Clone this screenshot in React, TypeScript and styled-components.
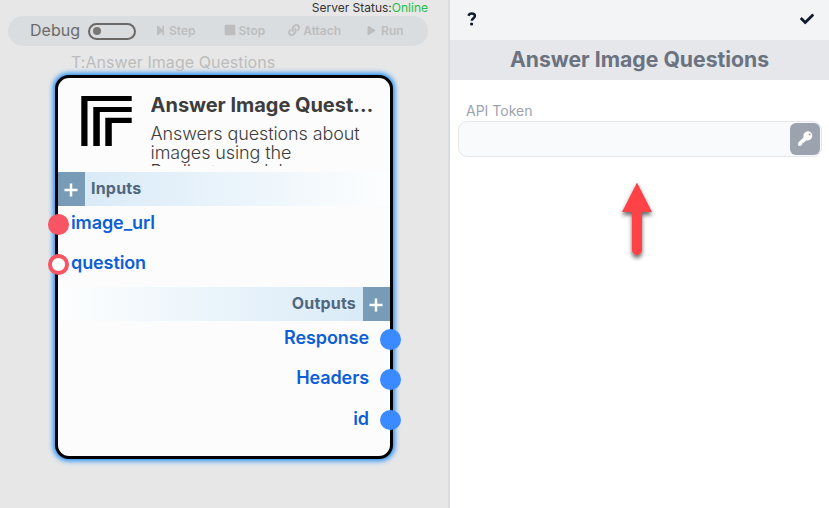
import React from "react";
import styled, { createGlobalStyle } from "styled-components";
import { FaStepForward, FaStop, FaPlay, FaCheck, FaLink } from "react-icons/fa";

const GlobalStyle = createGlobalStyle`
  *, *::before, *::after { box-sizing: border-box; }
  body { margin: 0; font-family: Inter, "Liberation Sans", sans-serif; background: #fff; }
  svg { display: block; flex: none; }
`;

const Page = styled.div`
  display: flex;
  width: 829px;
  height: 508px;
  overflow: hidden;
`;

const Canvas = styled.main`
  width: 448px;
  background: #e7e7e7;
`;

const ServerStatus = styled.div`
  height: 16px;
  padding-right: 20px;
  text-align: right;
  font-size: 12px;
  line-height: 16px;
  color: #333;
`;

const Online = styled.span`
  color: #22c04b;
`;

const Toolbar = styled.div`
  display: flex;
  align-items: center;
  width: 420px;
  height: 30px;
  margin-left: 8px;
  padding-left: 22px;
  border-radius: 15px;
  background: #d9dde0;
`;

const DebugLabel = styled.span`
  width: 58px;
  margin-top: -2px;
  font-size: 16px;
  line-height: 20px;
  letter-spacing: 0.05px;
  color: #6b6b6b;
`;

const Toggle = styled.span`
  display: flex;
  align-items: center;
  width: 48px;
  height: 17px;
  padding-left: 3px;
  border: 2px solid #6b6868;
  border-radius: 9px;

  &::before {
    content: "";
    width: 8px;
    height: 8px;
    border-radius: 50%;
    background: #777;
  }
`;

const Tool = styled.span<{ $offset: number; $gap: number }>`
  display: flex;
  align-items: center;
  gap: ${(p) => p.$gap}px;
  margin-left: ${(p) => p.$offset}px;
  color: #bdbdbd;
  font-size: 12px;
  font-weight: 600;
  line-height: 16px;

  svg { margin-top: -2px; }
`;

const NodeCaption = styled.div`
  height: 29px;
  padding: 6px 0 0 71px;
  font-size: 16px;
  line-height: 20px;
  letter-spacing: 0.05px;
  color: #bcbcbc;
`;

const Node = styled.section`
  width: 338px;
  height: 384px;
  margin-left: 55px;
  border: 3px solid #000;
  border-radius: 14px;
  background: #fcfcfc;
  box-shadow: 0 0 5px 1.5px #2490f5;
`;

const NodeHeader = styled.header`
  display: flex;
  height: 94px;
  padding: 18px 16px 0 23px;
`;

const Summary = styled.div`
  width: 224px;
  margin: -3px 0 0 18.6px;
  color: #3d3d3d;
`;

const NodeTitle = styled.h2`
  margin: 0;
  overflow: hidden;
  font-size: 20px;
  font-weight: 700;
  line-height: 25px;
  letter-spacing: -0.04px;
  white-space: nowrap;
  text-overflow: ellipsis;
`;

const Description = styled.p`
  width: 218px;
  height: 42px;
  margin: 6px 0 0;
  overflow: hidden;
  font-size: 18px;
  font-weight: 300;
  line-height: 19px;
  letter-spacing: -0.1px;
`;

const Band = styled.div<{ $side: "in" | "out" }>`
  display: flex;
  flex-direction: ${(p) => (p.$side === "in" ? "row" : "row-reverse")};
  align-items: center;
  gap: ${(p) => (p.$side === "in" ? 6 : 7)}px;
  height: 34px;
  background: linear-gradient(to ${(p) => (p.$side === "in" ? "right" : "left")}, #d6e9f7, #fdfefe);
`;

const BandLabel = styled.span`
  margin-top: -2px;
  color: #50677f;
  font-size: 16px;
  font-weight: 700;
  line-height: 20px;
  letter-spacing: 0.2px;
`;

const AddButton = styled.span`
  display: grid;
  place-items: center;
  width: 27px;
  height: 34px;
  padding: 2px 1px 0 0;
  background: #789cb8;
`;

const Ports = styled.div<{ $height: number }>`
  height: ${(p) => p.$height}px;
`;

const Port = styled.div<{ $side: "in" | "out" }>`
  position: relative;
  height: 40.4px;
  padding: ${(p) => (p.$side === "in" ? "6px 0 0 13px" : "6px 21px 0 0")};
  text-align: ${(p) => (p.$side === "in" ? "left" : "right")};
  color: #0d5fd8;
  font-size: 18px;
  font-weight: 600;
  line-height: 22px;
  letter-spacing: -0.1px;
`;

const Dot = styled.span<{ $side: "in" | "out"; $open?: boolean }>`
  position: absolute;
  top: 8px;
  ${(p) => (p.$side === "in" ? "left: -10px" : "right: -11px")};
  width: 21px;
  height: 20.5px;
  border-radius: 50%;
  border: 4px solid ${(p) => (p.$side === "in" ? "#f75464" : "#3b8aff")};
  background: ${(p) => (p.$open ? "#fff" : p.$side === "in" ? "#f75464" : "#3b8aff")};
`;

const Panel = styled.aside`
  width: 381px;
  border-left: 2px solid #d9dce1;
  background: #fff;
`;

const PanelBar = styled.div`
  display: flex;
  align-items: center;
  justify-content: space-between;
  height: 40px;
  padding: 0 15px 2px 17px;
  background: #f3f4f6;
  color: #111a2d;
`;

const PanelTitle = styled.h1`
  height: 40px;
  margin: 0;
  background: #e5e7eb;
  color: #6b7280;
  text-align: center;
  font-size: 21.2px;
  font-weight: 700;
  line-height: 39px;
`;

const Field = styled.label`
  display: block;
  padding: 21px 7px 0 8px;
`;

const FieldLabel = styled.span`
  display: block;
  height: 20px;
  padding-left: 8px;
  font-size: 14px;
  line-height: 19px;
  color: #9ca3af;
`;

const TokenBox = styled.div`
  display: flex;
  justify-content: flex-end;
  height: 36px;
  padding: 1px;
  border: 1px solid #e5e7eb;
  border-radius: 9px;
  background: #f9fafb;
`;

const KeyButton = styled.span`
  display: grid;
  place-items: center;
  width: 30px;
  height: 32px;
  padding-bottom: 2px;
  border-radius: 6px;
  background: #9ca3af;
  color: #fff;
`;

const Pointer = styled.svg`
  margin: 20px 0 0 167px;
`;

const Plus = () => (
  <svg width="14" height="14" viewBox="0 0 14 14">
    <path d="M7 .5v13M.5 7h13" stroke="#fff" strokeWidth="2.5" />
  </svg>
);

const Logo = () => (
  <svg width="51" height="51" viewBox="0 0 51 51">
    <path d="M.3 50V0h50.4v5H6.5v45zM12.3 50V11h38.4v5H18.8v34zM24.3 50V21.7h26.4V27H30.8v23z" fill="#000" />
  </svg>
);

const HelpIcon = () => (
  <svg width="10" height="14" viewBox="0 0 10 14" fill="none">
    <path d="M1.4 3.7C2 2.2 3.1 1.5 4.7 1.5C6.5 1.5 7.9 2.4 7.9 4C7.9 6.1 4.8 6.3 4.8 8.7" stroke="currentColor" strokeWidth="2.5" />
    <circle cx="4.6" cy="12" r="1.6" fill="currentColor" />
  </svg>
);

const KeyIcon = () => (
  <svg width="15" height="15" viewBox="0 0 15 15">
    <path
      d="M10.2 .2a4.7 4.7 0 0 0-4.6 6L.2 11.7V14.7H2.9L4.4 13.2V11.8H5.8L8.4 9.2a4.6 4.6 0 1 0 1.8-9zM11.6 2.5a1.05 1.05 0 1 1 0 2.1a1.05 1.05 0 0 1 0-2.1z"
      fill="currentColor"
      fillRule="evenodd"
    />
  </svg>
);

export default function App() {
  return (
    <Page>
      <GlobalStyle />
      <Canvas>
        <ServerStatus>Server Status:<Online>Online</Online></ServerStatus>
        <Toolbar>
          <DebugLabel>Debug</DebugLabel>
          <Toggle />
          <Tool $offset={19} $gap={3}><FaStepForward size={11} />Step</Tool>
          <Tool $offset={28} $gap={3}><FaStop size={12} />Stop</Tool>
          <Tool $offset={23} $gap={3}><FaLink size={12} />Attach</Tool>
          <Tool $offset={26} $gap={5}><FaPlay size={9} />Run</Tool>
        </Toolbar>
        <NodeCaption>T:Answer Image Questions</NodeCaption>
        <Node>
          <NodeHeader>
            <Logo />
            <Summary>
              <NodeTitle>Answer Image Questions</NodeTitle>
              <Description>Answers questions about images using the Replicate model</Description>
            </Summary>
          </NodeHeader>
          <Band $side="in"><AddButton><Plus /></AddButton><BandLabel>Inputs</BandLabel></Band>
          <Ports $height={81}>
            <Port $side="in"><Dot $side="in" />image_url</Port>
            <Port $side="in"><Dot $side="in" $open />question</Port>
          </Ports>
          <Band $side="out"><AddButton><Plus /></AddButton><BandLabel>Outputs</BandLabel></Band>
          <Ports $height={135}>
            {["Response", "Headers", "id"].map((name) => (
              <Port key={name} $side="out"><Dot $side="out" />{name}</Port>
            ))}
          </Ports>
        </Node>
      </Canvas>
      <Panel>
        <PanelBar><HelpIcon /><FaCheck size={14} /></PanelBar>
        <PanelTitle>Answer Image Questions</PanelTitle>
        <Field>
          <FieldLabel>API Token</FieldLabel>
          <TokenBox><KeyButton><KeyIcon /></KeyButton></TokenBox>
        </Field>
        <Pointer width="40" height="90" viewBox="0 0 40 90">
          <defs>
            <filter id="shade" x="-30%" y="-20%" width="160%" height="150%">
              <feDropShadow dx="0" dy="3" stdDeviation="2.2" floodColor="#000" floodOpacity="0.6" />
            </filter>
          </defs>
          <path d="M20 5.5L35 35H25V73a5 5 0 0 1-10 0V35H5Z" fill="#ff4245" filter="url(#shade)" />
        </Pointer>
      </Panel>
    </Page>
  );
}
